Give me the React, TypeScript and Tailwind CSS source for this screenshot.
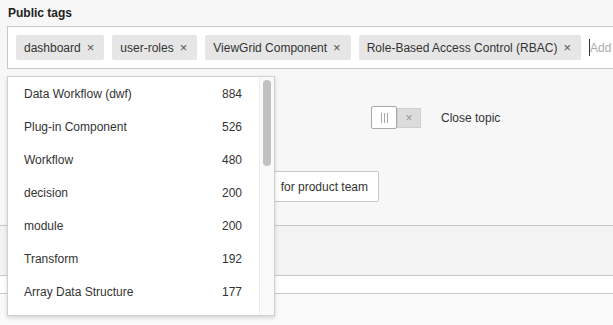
import React from "react";

const tags = ["dashboard", "user-roles", "ViewGrid Component", "Role-Based Access Control (RBAC)"];
const items: [string, number][] = [
  ["Data Workflow (dwf)", 884],
  ["Plug-in Component", 526],
  ["Workflow", 480],
  ["decision", 200],
  ["module", 200],
  ["Transform", 192],
  ["Array Data Structure", 177],
];

export default function App() {
  return (
    <div
      className="relative w-[613px] h-[325px] overflow-hidden bg-[#f7f7f7] text-[12px] text-[#333]"
      style={{ fontFamily: '"Liberation Sans", Arial, sans-serif' }}
    >
      <div className="h-[26px] flex items-center pl-[8px] font-bold text-[#222]">Public tags</div>
      <div className="ml-[7px] w-[640px] h-[43px] border border-[#c8c8c8] bg-white flex items-center gap-[8px] pl-[8px]">
        {tags.map((t) => (
          <div key={t} className="h-[25px] flex items-center bg-[#e6e6e6] rounded-[2px] pl-[8px] pr-[10px] whitespace-nowrap">
            <span>{t}</span>
            <span className="ml-[6px] text-[#555] text-[13px]">×</span>
          </div>
        ))}
        <div className="flex items-center h-[18px]">
          <span className="w-[1px] h-[17px] bg-[#333]" />
          <span className="text-[#aaa]">Add</span>
        </div>
      </div>

      <div className="mt-[37px] h-[23px] flex items-center">
        <div className="ml-[371px] w-[26px] h-[23px] bg-white border border-[#a8a8a8] rounded-[2px] flex items-center justify-center gap-[2px]">
          <span className="w-[1px] h-[10px] bg-[#aaa]" />
          <span className="w-[1px] h-[10px] bg-[#aaa]" />
          <span className="w-[1px] h-[10px] bg-[#aaa]" />
        </div>
        <div className="w-[24px] h-[20px] bg-[#dcdcdc] border border-[#cfcfcf] flex items-center justify-center text-[#999] text-[12px]">
          ×
        </div>
        <span className="ml-[20px]">Close topic</span>
      </div>

      <div className="mt-[42px] ml-[150px] w-[229px] h-[31px] bg-white border border-[#c8c8c8] rounded-[2px] flex items-center justify-end pr-[10px] whitespace-nowrap">
        for product team
      </div>

      <div className="mt-[23px] border-t border-[#c8c8c8] h-[50px] bg-[#f3f3f3]" />
      <div className="border-t border-[#c8c8c8] h-[18px] bg-white" />
      <div className="border-t border-[#c8c8c8] h-[40px] bg-[#fafafa]" />

      <div className="absolute left-[7px] top-[76px] w-[268px] h-[240px] bg-white border border-[#d0d0d0] shadow-[0_2px_4px_rgba(0,0,0,0.15)] flex overflow-hidden">
        <div className="flex-1 flex flex-col">
          {items.map(([name, n]) => (
            <div key={name} className="h-[33px] shrink-0 flex items-center justify-between pl-[16px] pr-[17px]">
              <span>{name}</span>
              <span>{n}</span>
            </div>
          ))}
        </div>
        <div className="w-[15px] border-l border-[#ececec] bg-[#fafafa] flex justify-center pt-[3px]">
          <div className="w-[8px] h-[86px] rounded-full bg-[#c1c1c1]" />
        </div>
      </div>
    </div>
  );
}
